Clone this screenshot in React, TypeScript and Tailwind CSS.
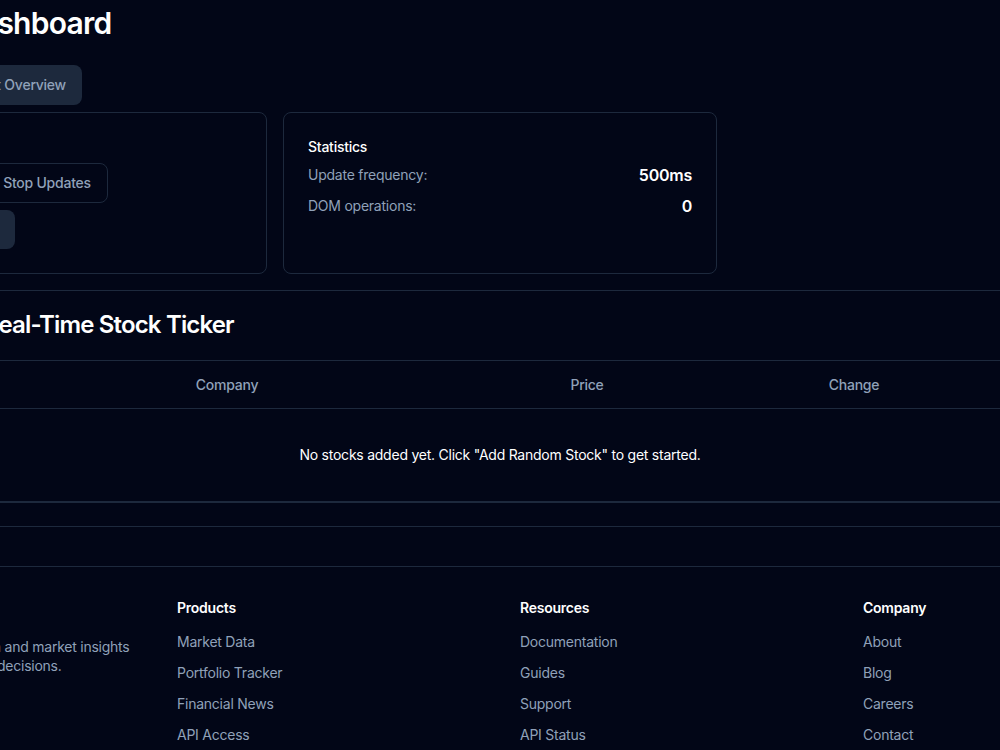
import React from 'react';

const products = ['Market Data', 'Portfolio Tracker', 'Financial News', 'API Access'];
const resources = ['Documentation', 'Guides', 'Support', 'API Status'];
const company = ['About', 'Blog', 'Careers', 'Contact'];

const FooterColumn: React.FC<{ title: string; links: string[] }> = ({ title, links }) => (
  <div>
    <h4 className="mb-[14px] text-sm font-semibold leading-5 text-white">{title}</h4>
    <ul className="space-y-[11px]">
      {links.map(link => (
        <li key={link} className="text-sm leading-5 text-slate-400">{link}</li>
      ))}
    </ul>
  </div>
);

export default function App() {
  return (
    <div className="min-h-screen w-full overflow-hidden bg-[#020617] font-[Inter,sans-serif] tracking-[-0.015em] text-white">
      {/* Page header */}
      <section className="border-b border-slate-800 pb-4">
        <h1 className="-ml-[40px] pt-[5px] text-3xl font-semibold leading-9 tracking-tight text-white">Dashboard</h1>

        <div className="-ml-[62px] mt-6 flex gap-2">
          <button className="flex h-10 w-[144px] items-center justify-end rounded-lg bg-slate-800 pr-4 text-sm font-medium text-slate-400">
            Market Overview
          </button>
        </div>

        <div className="mt-[7px] flex gap-4">
          {/* Controls */}
          <div className="-ml-[197px] w-[464px] shrink-0 rounded-lg border border-slate-800 p-6">
            <h3 className="text-sm font-medium leading-5 text-white">Controls</h3>
            <div className="mt-[6px] flex gap-2">
              <button className="h-10 w-[150px] rounded-lg bg-slate-800 text-sm font-medium text-slate-300">
                Add Random Stock
              </button>
              <button className="h-10 w-[122px] rounded-lg border border-slate-800 text-sm font-medium text-slate-400">
                Stop Updates
              </button>
            </div>
            <div className="mt-[7px] flex">
              <button className="h-[39px] w-[187px] rounded-lg bg-slate-800 text-sm font-medium text-slate-300">
                Clear All Stocks
              </button>
            </div>
          </div>

          {/* Statistics */}
          <div className="w-[434px] shrink-0 rounded-lg border border-slate-800 p-6">
            <h3 className="text-sm font-medium leading-5 text-white">Statistics</h3>
            <div className="mt-[6px] space-y-[7px]">
              <div className="flex items-center justify-between">
                <span className="text-sm text-slate-400">Update frequency:</span>
                <span className="text-base font-semibold text-white">500ms</span>
              </div>
              <div className="flex items-center justify-between">
                <span className="text-sm text-slate-400">DOM operations:</span>
                <span className="text-base font-semibold text-white">0</span>
              </div>
            </div>
          </div>
        </div>
      </section>

      {/* Ticker */}
      <section className="border-b-2 border-slate-800">
        <h2 className="-ml-[16px] pb-[19px] pt-[18px] text-2xl font-semibold leading-8 tracking-[-0.035em] text-white">
          Real-Time Stock Ticker
        </h2>
        <table className="-ml-[166px] w-[1332px] table-fixed border-t border-slate-800">
          <colgroup>
            <col className="w-[222px]" />
            <col className="w-[342px]" />
            <col className="w-[378px]" />
            <col className="w-[156px]" />
            <col className="w-[234px]" />
          </colgroup>
          <thead>
            <tr className="border-b border-slate-800">
              <th className="h-12 text-center text-sm font-medium text-slate-400">Symbol</th>
              <th className="h-12 text-center text-sm font-medium text-slate-400">Company</th>
              <th className="h-12 text-center text-sm font-medium text-slate-400">Price</th>
              <th className="h-12 text-center text-sm font-medium text-slate-400">Change</th>
              <th className="h-12 text-center text-sm font-medium text-slate-400">Volume</th>
            </tr>
          </thead>
          <tbody>
            <tr>
              <td colSpan={5} className="py-9 text-center text-sm leading-5 text-white">
                No stocks added yet. Click "Add Random Stock" to get started.
              </td>
            </tr>
          </tbody>
        </table>
      </section>

      <div className="h-[24px] border-b border-slate-800" />
      <div className="h-[39px]" />

      {/* Footer */}
      <footer className="border-t border-slate-800 pt-[31px]">
        <div className="-ml-[166px] grid w-[1332px] grid-cols-4 gap-10">
          <div className="pl-[17px]">
            <h3 className="mb-[11px] text-lg font-bold leading-7 text-white">StockPulse</h3>
            <p className="text-sm leading-[19px] text-slate-400">
              Real-time financial data and market insights to help you make wise decisions.
            </p>
          </div>
          <FooterColumn title="Products" links={products} />
          <FooterColumn title="Resources" links={resources} />
          <FooterColumn title="Company" links={company} />
        </div>
      </footer>
    </div>
  );
}
